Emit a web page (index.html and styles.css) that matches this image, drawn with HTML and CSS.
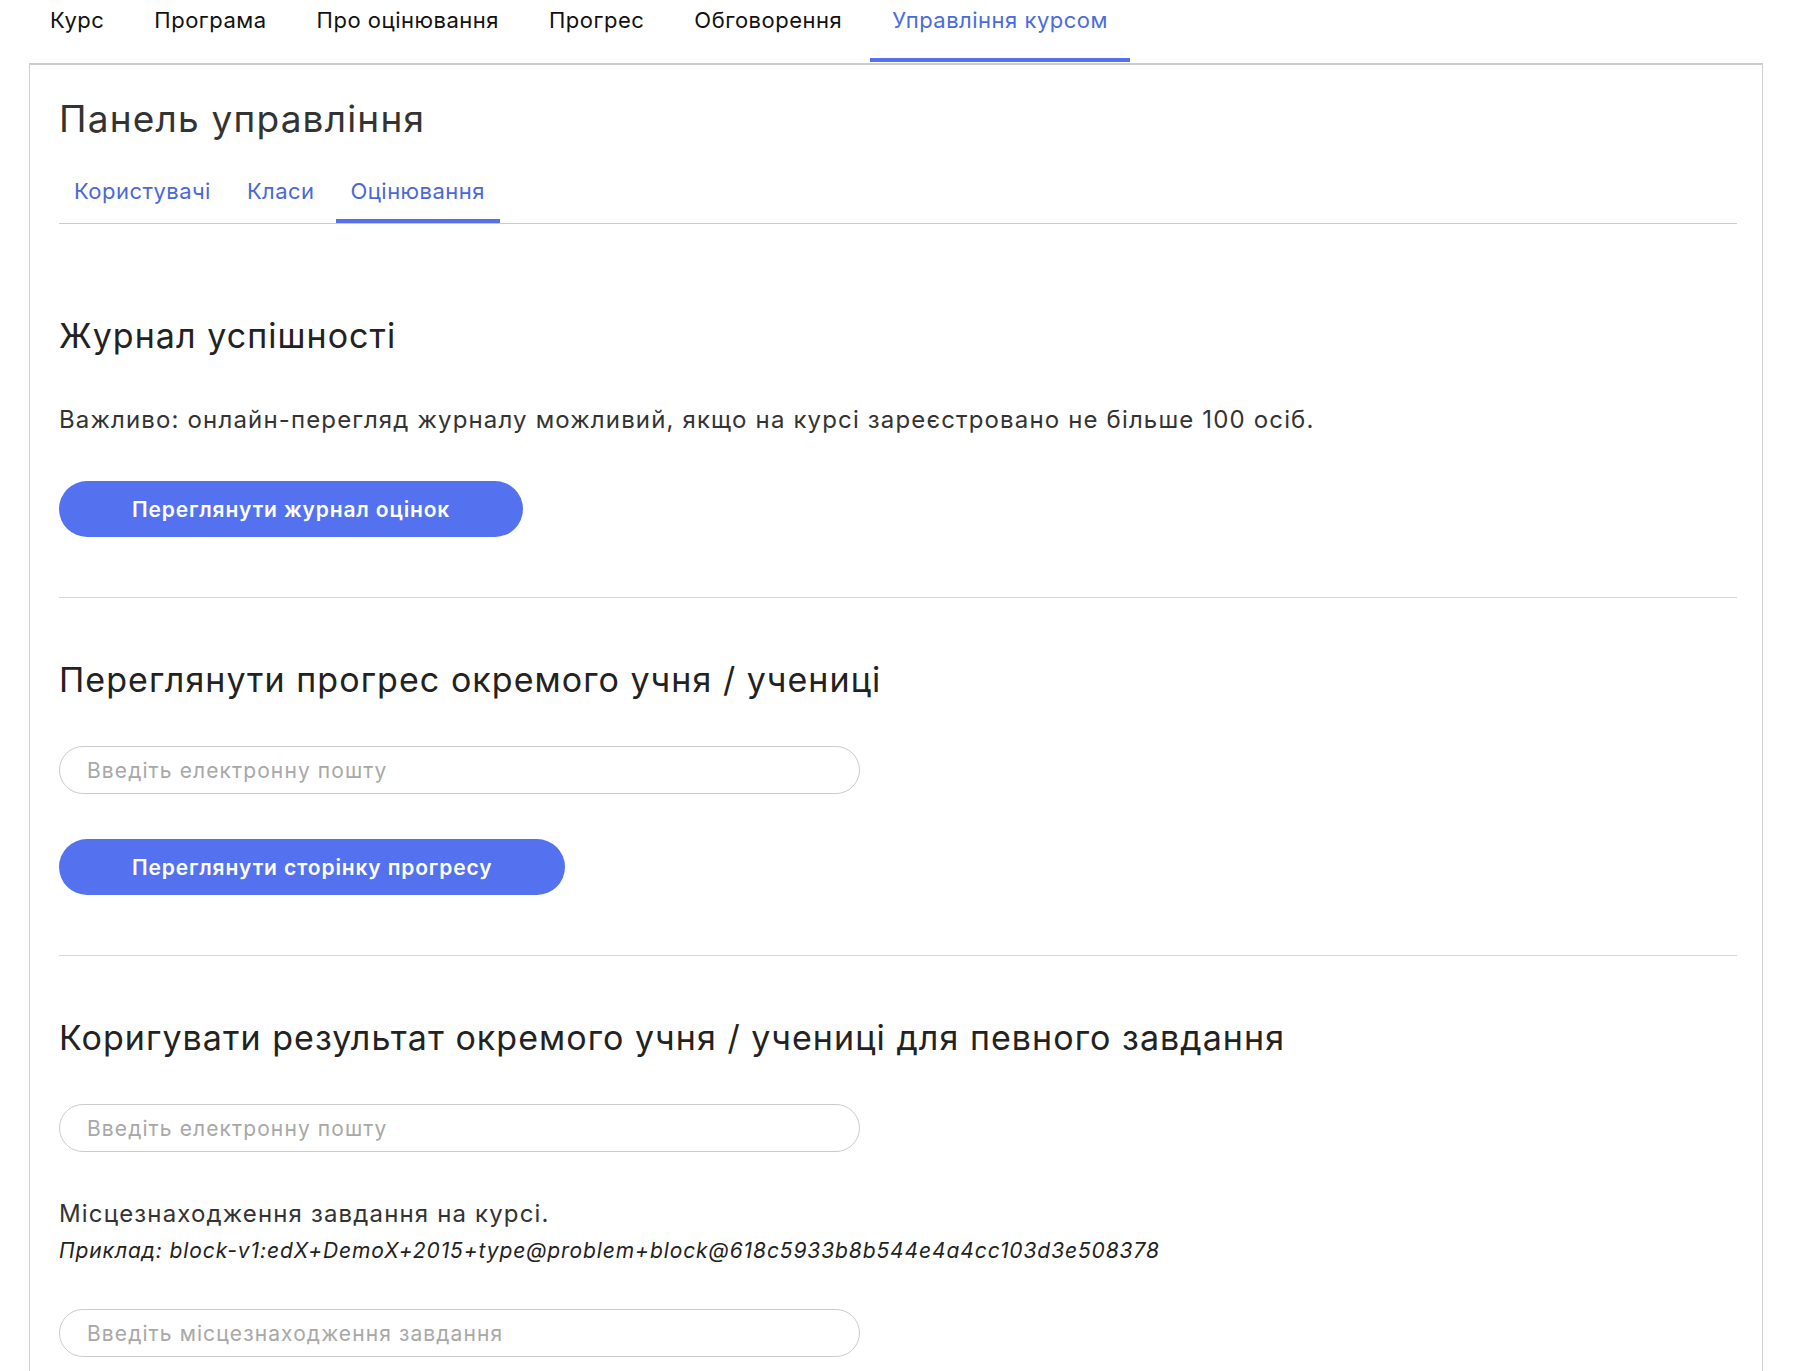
FILE: index.html
```html
<!DOCTYPE html>
<html lang="uk">
<head>
<meta charset="utf-8">
<title>Управління курсом</title>
<link rel="stylesheet" href="styles.css">
</head>
<body>
<nav class="course-nav">
  <a class="course-tab" href="#">Курс</a>
  <a class="course-tab" href="#">Програма</a>
  <a class="course-tab" href="#">Про оцінювання</a>
  <a class="course-tab" href="#">Прогрес</a>
  <a class="course-tab" href="#">Обговорення</a>
  <a class="course-tab active" href="#">Управління курсом</a>
</nav>
<main class="panel">
  <h1 class="panel-title">Панель управління</h1>
  <div class="sub-tabs">
    <a class="sub-tab" href="#">Користувачі</a>
    <a class="sub-tab" href="#">Класи</a>
    <a class="sub-tab active" href="#">Оцінювання</a>
  </div>

  <section class="section first">
    <h2 class="section-title">Журнал успішності</h2>
    <p class="note">Важливо: онлайн-перегляд журналу можливий, якщо на курсі зареєстровано не більше 100 осіб.</p>
    <button class="btn" type="button">Переглянути журнал оцінок</button>
  </section>

  <section class="section">
    <h2 class="section-title">Переглянути прогрес окремого учня / учениці</h2>
    <input class="field" type="text" placeholder="Введіть електронну пошту">
    <button class="btn" type="button">Переглянути сторінку прогресу</button>
  </section>

  <section class="section last">
    <h2 class="section-title">Коригувати результат окремого учня / учениці для певного завдання</h2>
    <input class="field" type="text" placeholder="Введіть електронну пошту">
    <div class="hint">
      <p class="hint-label">Місцезнаходження завдання на курсі.</p>
      <p class="hint-example">Приклад: block-v1:edX+DemoX+2015+type@problem+block@618c5933b8b544e4a4cc103d3e508378</p>
    </div>
    <input class="field" type="text" placeholder="Введіть місцезнаходження завдання">
  </section>
</main>
</body>
</html>
```

FILE: styles.css
```css
* {
  box-sizing: border-box;
}

html, body {
  margin: 0;
  padding: 0;
  background: #ffffff;
}

body {
  font-family: Inter, "Noto Sans", "Liberation Sans", sans-serif;
  color: #333333;
  overflow: hidden;
  height: 1371px;
}

a {
  text-decoration: none;
}

.course-nav {
  display: flex;
  gap: 6px;
  padding-left: 28px;
  height: 62px;
}

.course-tab {
  display: block;
  padding: 8px 22px 0;
  height: 62px;
  font-size: 22px;
  line-height: 25px;
  color: #111111;
  letter-spacing: 0.5px;
  border-bottom: 4px solid transparent;
}

.course-tab.active {
  color: #4a6be0;
  border-bottom-color: #5570ee;
}

.panel {
  margin: 1px 37px 0 29px;
  border: 1px solid #cfcfcf;
  border-top: 2px solid #cccccc;
  border-bottom: none;
  padding: 0 25px 0 29px;
  min-height: 1310px;
}

.panel-title {
  margin: 32px 0 0;
  font-size: 37px;
  line-height: 44px;
  font-weight: 400;
  color: #333333;
  letter-spacing: 1.2px;
}

.sub-tabs {
  display: flex;
  gap: 6px;
  margin-top: 38px;
  border-bottom: 1px solid #cccccc;
}

.sub-tab {
  display: block;
  padding: 0 15px 15px;
  font-size: 22px;
  line-height: 25px;
  color: #4a68d8;
  letter-spacing: 0.45px;
  border-bottom: 4px solid transparent;
}

.sub-tab.active {
  border-bottom-color: #5570ee;
}

.section {
  display: flex;
  flex-direction: column;
  align-items: flex-start;
  gap: 45px;
  padding: 61px 0 60px;
  border-bottom: 1px solid #d6d6d6;
}

.section.first {
  gap: 46px;
  padding-top: 91px;
}

.section.last {
  border-bottom: none;
}

.section-title {
  margin: 0;
  font-size: 34px;
  line-height: 42px;
  font-weight: 400;
  color: #222222;
  letter-spacing: 1.05px;
}

.note {
  margin: 2px 0 0;
  font-size: 24px;
  line-height: 30px;
  color: #333333;
  letter-spacing: 1.15px;
}

.btn {
  height: 56px;
  padding: 0 73px;
  border: none;
  border-radius: 28px;
  background: #5472f0;
  color: #ffffff;
  font-family: inherit;
  font-size: 21px;
  font-weight: 600;
  letter-spacing: 0.85px;
}

.field {
  width: 801px;
  height: 48px;
  padding: 0 27px;
  border: 1px solid #cccccc;
  border-radius: 24px;
  background: #ffffff;
  font-family: inherit;
  font-size: 21px;
  color: #333333;
  letter-spacing: 1.1px;
}

.field::placeholder {
  color: #a8a8a8;
}

.hint {
  display: flex;
  flex-direction: column;
  gap: 9px;
  margin-top: 2px;
}

.hint-label {
  margin: 0;
  font-size: 24px;
  line-height: 30px;
  color: #333333;
  letter-spacing: 1.15px;
}

.hint-example {
  margin: 0;
  font-size: 21px;
  line-height: 26px;
  font-style: italic;
  color: #222222;
  letter-spacing: 0.9px;
}
```
